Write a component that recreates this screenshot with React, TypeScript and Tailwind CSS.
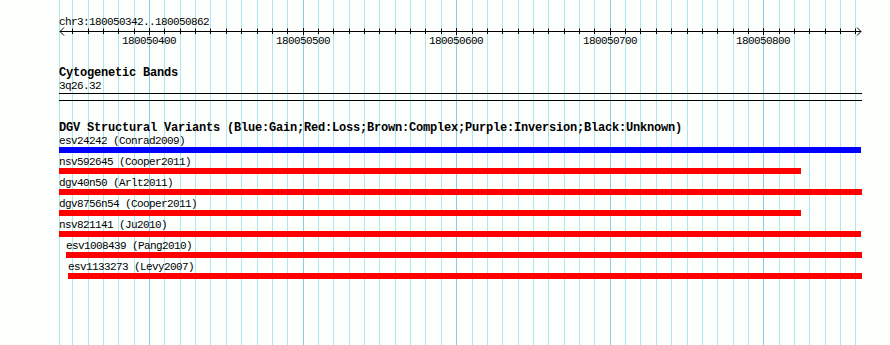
const BP = 1.5358
const posOf = (bp: number) => 149 + (bp - 180050400) * BP

const gridLines: { x: number; major: boolean }[] = [{ x: 59, major: false }]
for (let k = -5; k <= 46; k++) {
  gridLines.push({ x: Math.round(149 + k * 10 * BP), major: k % 10 === 0 })
}

const labels = [180050400, 180050500, 180050600, 180050700, 180050800]

const variants = [
  { name: "esv24242 (Conrad2009)", color: "bg-[#0000ff]", offset: "ml-0", width: "w-[802px]" },
  { name: "nsv592645 (Cooper2011)", color: "bg-[#ff0000]", offset: "ml-0", width: "w-[742px]" },
  { name: "dgv40n50 (Arlt2011)", color: "bg-[#ff0000]", offset: "ml-0", width: "w-[803px]" },
  { name: "dgv8756n54 (Cooper2011)", color: "bg-[#ff0000]", offset: "ml-0", width: "w-[742px]" },
  { name: "nsv821141 (Ju2010)", color: "bg-[#ff0000]", offset: "ml-0", width: "w-[802px]" },
  { name: "esv1008439 (Pang2010)", color: "bg-[#ff0000]", offset: "ml-[7px]", width: "w-[796px]" },
  { name: "esv1133273 (Levy2007)", color: "bg-[#ff0000]", offset: "ml-[9px]", width: "w-[794px]" },
]

const Ruler = () => (
  <div className="relative h-[22px] w-[803px]">
    <svg width={803} height={22} className="absolute left-0 top-0 overflow-visible">
      <line x1={1} y1={2.5} x2={802} y2={2.5} stroke="#000" strokeWidth={1} />
      <polyline points="5,-1.5 1,2.5 5,6.5" fill="none" stroke="#000" strokeWidth={1} />
      <polyline points="798,-1.5 802,2.5 798,6.5" fill="none" stroke="#000" strokeWidth={1} />
      {gridLines.slice(1).map((g) => (
        <line
          key={g.x}
          x1={g.x - 59 + 0.5}
          y1={g.major ? -1 : -0.5}
          x2={g.x - 59 + 0.5}
          y2={g.major ? 6 : 5}
          stroke="#000"
          strokeWidth={1}
        />
      ))}
    </svg>
    {labels.map((bp) => (
      <span
        key={bp}
        className="absolute top-[6px] text-[11px] leading-[13px] tracking-[-0.6px] text-black"
        style={{ left: Math.round(posOf(bp) - 59 - 27) }}
      >
        {bp}
      </span>
    ))}
  </div>
)

export default function App() {
  return (
    <div className="relative h-[345px] w-[890px] overflow-hidden bg-[#fdfffd] font-['Liberation_Mono',monospace] text-black">
      {/* grid behind the tracks */}
      <svg width={890} height={345} className="absolute left-0 top-0">
        {gridLines.map((g) => (
          <line
            key={g.x}
            x1={g.x + 0.5}
            y1={0}
            x2={g.x + 0.5}
            y2={345}
            stroke={g.major ? "#8ccbe8" : "#aee8ee"}
            strokeWidth={1}
          />
        ))}
      </svg>

      <div className="relative flex flex-col pl-[59px] pt-[16px]">
        <div className="text-[11px] leading-[13px] tracking-[-0.6px]">chr3:180050342..180050862</div>
        <Ruler />

        <div className="mt-[16px] whitespace-nowrap text-[12px] font-bold leading-[13px] tracking-[-0.2px]">
          Cytogenetic Bands
        </div>
        <div className="text-[11px] leading-[13px] tracking-[-0.6px]">3q26.32</div>
        <div className="h-[8px] w-[803px] border-y border-black" />

        <div className="mt-[20px] whitespace-nowrap text-[12px] font-bold leading-[14px] tracking-[-0.2px]">
          DGV Structural Variants (Blue:Gain;Red:Loss;Brown:Complex;Purple:Inversion;Black:Unknown)
        </div>

        {variants.map((v) => (
          <div key={v.name} className={`flex h-[21px] flex-col ${v.offset}`}>
            <div className="whitespace-nowrap text-[11px] leading-[12px] tracking-[-0.6px]">{v.name}</div>
            <div className={`h-[6px] ${v.width} ${v.color}`} />
          </div>
        ))}
      </div>
    </div>
  )
}
